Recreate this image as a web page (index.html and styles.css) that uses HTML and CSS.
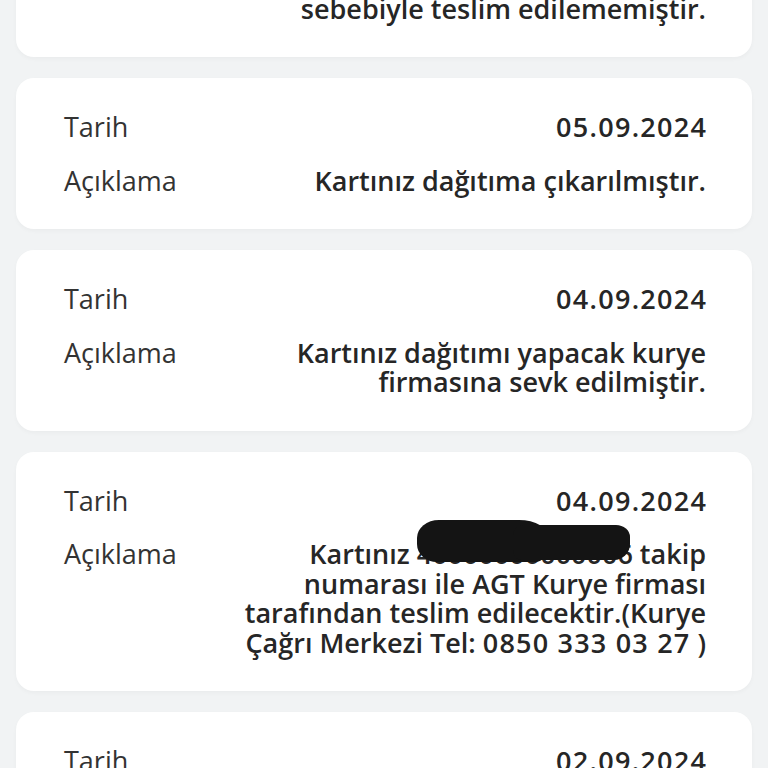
FILE: index.html
```html
<!DOCTYPE html>
<html lang="tr">
<head>
<meta charset="utf-8">
<link rel="stylesheet" href="styles.css">
</head>
<body>
<main class="list">
  <section class="card">
    <div class="row"><span class="label">Tarih</span><span class="value num">06.09.2024</span></div>
    <div class="row"><span class="label">Açıklama</span><span class="value">Kartınız adreste bulunamama<br>sebebiyle teslim edilememiştir.</span></div>
  </section>
  <section class="card">
    <div class="row"><span class="label">Tarih</span><span class="value num">05.09.2024</span></div>
    <div class="row"><span class="label">Açıklama</span><span class="value">Kartınız dağıtıma çıkarılmıştır.</span></div>
  </section>
  <section class="card">
    <div class="row"><span class="label">Tarih</span><span class="value num">04.09.2024</span></div>
    <div class="row"><span class="label">Açıklama</span><span class="value">Kartınız dağıtımı yapacak kurye firmasına sevk edilmiştir.</span></div>
  </section>
  <section class="card">
    <div class="row"><span class="label">Tarih</span><span class="value num">04.09.2024</span></div>
    <div class="row"><span class="label">Açıklama</span><span class="value">Kartınız <span class="redacted">40000000000006<span class="blob blob-left"></span><span class="blob blob-right"></span></span> takip numarası ile AGT Kurye firması tarafından teslim edilecektir.(Kurye Çağrı Merkezi Tel: <span class="num">0850 333 03 27</span> )</span></div>
  </section>
  <section class="card">
    <div class="row"><span class="label">Tarih</span><span class="value num">02.09.2024</span></div>
    <div class="row"><span class="label">Açıklama</span><span class="value">Kartınız teslimat merkezine ulaşmıştır.</span></div>
  </section>
</main>
</body>
</html>
```

FILE: styles.css
```css
html, body {
  margin: 0;
  padding: 0;
  background: #f1f3f4;
}

body {
  font-family: "Open Sans", "Noto Sans", sans-serif;
  color: #2a2a2a;
  overflow: hidden;
  height: 768px;
}

.list {
  display: flex;
  flex-direction: column;
  gap: 21px;
  padding: 0 16px;
  margin-top: -123.5px;
}

.card {
  background: #ffffff;
  border-radius: 18px;
  padding: 34px 46px 34px 48px;
  display: flex;
  flex-direction: column;
  gap: 24px;
  box-shadow: 0 2px 4px rgba(0, 0, 0, 0.03);
}

.row {
  display: grid;
  grid-template-columns: 176px 1fr;
  align-items: start;
  font-size: 27px;
  line-height: 29.5px;
}

.label {
  color: #333333;
  font-weight: 400;
}

.value {
  text-align: right;
  font-weight: 600;
  color: #262626;
}

.num {
  letter-spacing: 1.2px;
}

.value.num {
  letter-spacing: 1.3px;
  margin-right: -1.3px;
}

.redacted {
  position: relative;
  display: inline-block;
  line-height: 29.5px;
}

.blob {
  position: absolute;
  z-index: 1;
  display: block;
  background: #141414;
}

.blob-left {
  left: 0;
  top: -19px;
  width: 132px;
  height: 42px;
  border-radius: 22px 30px 14px 20px / 18px 18px 18px 18px;
}

.blob-right {
  left: 96px;
  top: -14px;
  width: 117px;
  height: 35px;
  border-radius: 10px 14px 16px 8px / 10px 12px 16px 10px;
}
```
